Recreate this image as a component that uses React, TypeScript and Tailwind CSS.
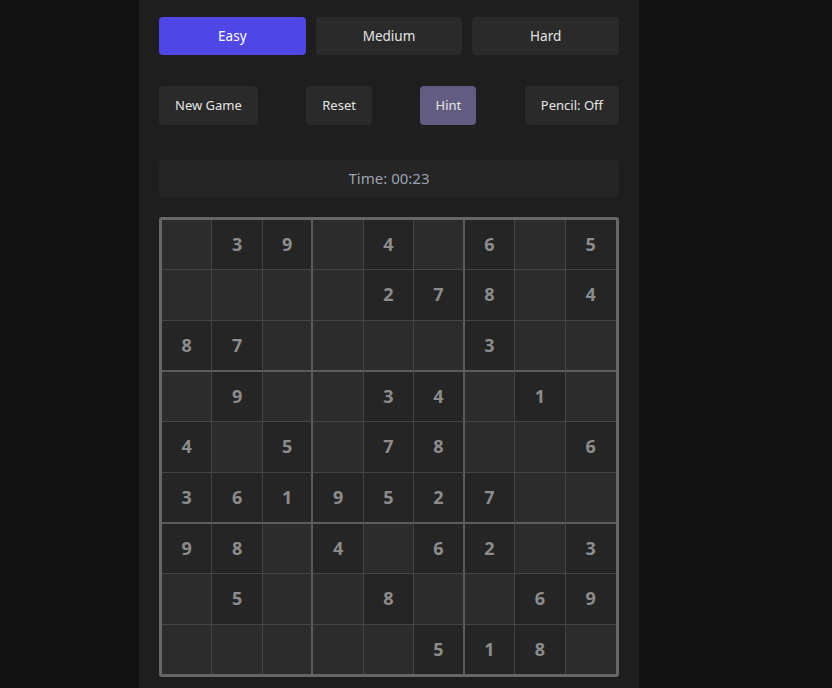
import { useState } from "react";

const PUZZLE = [
  "039040605",
  "000027804",
  "870000300",
  "090034010",
  "405078006",
  "361952700",
  "980406203",
  "050080069",
  "000005180",
];

export default function App() {
  const [difficulty, setDifficulty] = useState("Easy");
  const [pencil, setPencil] = useState(false);

  return (
    <div
      className="min-h-[688px] bg-[#111111] text-[#e5e5e5]"
      style={{ fontFamily: '"Noto Sans", "Open Sans", sans-serif' }}
    >
      <div className="ml-[139px] min-h-[688px] w-[500px] bg-[#1e1e1e] px-5 pt-[17px]">
        <div className="flex gap-2.5">
          {["Easy", "Medium", "Hard"].map((d) => (
            <button
              key={d}
              type="button"
              onClick={() => setDifficulty(d)}
              className={
                difficulty === d
                  ? "h-[38px] flex-1 rounded bg-[#4f46e5] pt-px text-[13.5px] text-white"
                  : "h-[38px] flex-1 rounded bg-[#2a2a2a] pt-px text-[13.5px] text-[#e5e5e5]"
              }
            >
              {d}
            </button>
          ))}
        </div>

        <div className="mt-[31px] flex justify-between">
          <button type="button" className="h-[39px] rounded bg-[#2a2a2a] px-4 text-[13px]">
            New Game
          </button>
          <button type="button" className="h-[39px] rounded bg-[#2a2a2a] px-4 text-[13px]">
            Reset
          </button>
          <button type="button" className="h-[39px] w-14 rounded bg-[#625d80] text-[13px]">
            Hint
          </button>
          <button
            type="button"
            onClick={() => setPencil(!pencil)}
            className="h-[39px] rounded bg-[#2a2a2a] px-4 text-[13px]"
          >
            Pencil: {pencil ? "On" : "Off"}
          </button>
        </div>

        <div className="mt-[35px] flex h-[37px] items-center justify-center rounded bg-[#252525] text-[15px] text-[#9ca3af]">
          Time: 00:23
        </div>

        <div className="mt-5 grid h-[460px] grid-cols-9 rounded-[3px] border-[3px] border-[#666666]">
          {PUZZLE.map((row, r) =>
            row.split("").map((v, c) => {
              const right =
                c === 8 ? "" : c === 2 || c === 5 ? "border-r-2 border-r-[#5c5c5c]" : "border-r border-r-[#444444]";
              const bottom =
                r === 8 ? "" : r === 2 || r === 5 ? "border-b-2 border-b-[#5c5c5c]" : "border-b border-b-[#444444]";
              return (
                <div
                  key={`${r}-${c}`}
                  className={`flex items-center justify-center text-[18px] font-bold text-[#8c8c8c] ${right} ${bottom} ${
                    v === "0" ? "bg-[#2c2c2c]" : "bg-[#252525]"
                  }`}
                >
                  {v === "0" ? "" : v}
                </div>
              );
            })
          )}
        </div>
      </div>
    </div>
  );
}
